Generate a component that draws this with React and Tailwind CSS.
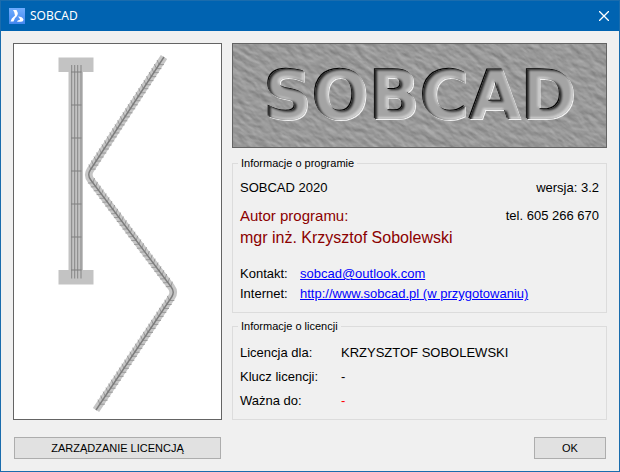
import React from "react";

const SEGMENTS = [
  { from: [73, 131], to: [150, 13] },
  { from: [161, 248], to: [73, 131] },
  { from: [82, 366], to: [161, 248] },
];

function ribsFor({ from, to }) {
  const dx = to[0] - from[0];
  const dy = to[1] - from[1];
  const length = Math.hypot(dx, dy);
  const angle = Math.atan2(dy, dx);
  const spread = 0.98;
  let d = "";
  for (let s = 7; s < length - 6; s += 4.8) {
    const x = from[0] + (dx * s) / length;
    const y = from[1] + (dy * s) / length;
    const ax = x + 5 * Math.cos(angle + spread);
    const ay = y + 5 * Math.sin(angle + spread);
    const bx = x + 5 * Math.cos(angle - spread);
    const by = y + 5 * Math.sin(angle - spread);
    d += `M${ax.toFixed(1)} ${ay.toFixed(1)}L${x.toFixed(1)} ${y.toFixed(1)}L${bx.toFixed(1)} ${by.toFixed(1)}`;
  }
  return d;
}

const BAR = "M150 13L76.3 126Q73 131 76.8 136L157.2 243Q161 248 157.7 253L82 366";

function Reinforcement() {
  return (
    <svg viewBox="0 0 207 375" className="h-auto w-full" role="img" aria-label="Zbrojenie" fill="none">
      <g fill="#c3c3c3">
        <rect x="44.5" y="13.5" width="35" height="14.5" />
        <rect x="44.5" y="226" width="35" height="14.5" />
        <rect x="54.5" y="28" width="14.5" height="198" />
      </g>
      <path d="M57.7 21V234.5M60.7 21V234.5M63.7 21V234.5M67 21V234.5" stroke="#858585" />
      <path
        d="M57 28h10.5M57 61h10.5M57 94h10.5M57 127h10.5M57 160h10.5M57 193h10.5M57 226h10.5"
        stroke="#808080"
        strokeWidth="1.2"
      />
      <path d={BAR} stroke="#c6c6c6" strokeWidth="7.6" />
      {SEGMENTS.map((segment, i) => (
        <path key={i} d={ribsFor(segment)} stroke="#939393" strokeWidth="0.9" />
      ))}
      <path d={BAR} stroke="#7c7c7c" strokeWidth="1.4" />
    </svg>
  );
}

function StoneLogo() {
  return (
    <svg viewBox="0 0 373 103" className="block w-full" role="img" aria-label="SOBCAD">
      <defs>
        <filter id="stone" x="0" y="0" width="100%" height="100%" colorInterpolationFilters="sRGB">
          <feTurbulence type="fractalNoise" baseFrequency="0.08 0.16" numOctaves="5" seed="8" />
          <feColorMatrix values="0 0 0 0 0  0 0 0 0 0  0 0 0 0 0  1 0 0 0 0" />
          <feDiffuseLighting surfaceScale="0.5" lightingColor="#d8d8d8" diffuseConstant="1">
            <feDistantLight azimuth="70" elevation="45" />
          </feDiffuseLighting>
        </filter>
        <filter id="bevel" x="-5%" y="-20%" width="110%" height="140%" colorInterpolationFilters="sRGB">
          <feOffset in="SourceAlpha" dx="-1" dy="-1" result="up" />
          <feOffset in="SourceAlpha" dx="1" dy="1" result="down" />
          <feFlood floodColor="#050505" />
          <feComposite in2="up" operator="in" result="dark" />
          <feFlood floodColor="#f2f2f2" />
          <feComposite in2="down" operator="in" result="light" />
          <feOffset in="SourceAlpha" dx="2" dy="1" />
          <feGaussianBlur stdDeviation="1.3" result="soft" />
          <feFlood floodColor="#222222" />
          <feComposite in2="soft" operator="out" />
          <feComposite in2="SourceAlpha" operator="in" result="shade" />
          <feOffset in="SourceAlpha" dx="-2" dy="-2" />
          <feGaussianBlur stdDeviation="1" result="softer" />
          <feFlood floodColor="#d0d0d0" />
          <feComposite in2="softer" operator="out" />
          <feComposite in2="SourceAlpha" operator="in" result="shine" />
          <feMerge>
            <feMergeNode in="light" />
            <feMergeNode in="dark" />
            <feMergeNode in="SourceGraphic" />
            <feMergeNode in="shine" />
            <feMergeNode in="shade" />
          </feMerge>
        </filter>
      </defs>
      <rect width="373" height="103" fill="#999999" />
      <g transform="rotate(35 186 51)">
        <rect x="-60" y="-140" width="500" height="390" filter="url(#stone)" />
      </g>
      <text
        x="187"
        y="75"
        textAnchor="middle"
        fill="#a4a4a4"
        filter="url(#bevel)"
        className="font-['DejaVu_Sans',sans-serif] text-[67px] font-bold"
      >
        SOBCAD
      </text>
    </svg>
  );
}

function AppIcon() {
  return (
    <svg viewBox="0 0 16 16" className="size-4" aria-hidden="true">
      <defs>
        <linearGradient id="tile" x1="0" y1="0" x2="0" y2="1">
          <stop offset="0" stopColor="#6fadff" />
          <stop offset="1" stopColor="#4387ee" />
        </linearGradient>
      </defs>
      <rect width="16" height="16" fill="url(#tile)" />
      <path d="M4 2H7.500Q9.500 5 8.500 7Q7.500 9 6 10L4.500 13.500H1.500L2.800 10.500L6 7.500Q5.800 4 4 2z" fill="#fff" />
      <path d="M9 8.500Q13.500 8.500 14.500 11.500Q14.500 13.700 12 13.700H8Q8 12 11 11.700Q11 10.500 9 8.500z" fill="#fff" />
    </svg>
  );
}

function Group({ title, children }) {
  return (
    <fieldset className="border border-[#dcdcdc] px-[7px]">
      <legend className="-ml-0.5 px-[3px] text-[11px] leading-[13px]">{title}</legend>
      {children}
    </fieldset>
  );
}

function LicenseRow({ label, value, valueClass = "" }) {
  return (
    <div className="flex leading-6">
      <dt className="w-[101px]">{label}</dt>
      <dd className={valueClass}>{value}</dd>
    </div>
  );
}

const BUTTON = "h-[22px] border border-[#adadad] bg-[#e1e1e1] text-[11px] leading-5";

export default function App() {
  return (
    <div className="flex min-h-screen flex-col border border-[#1a6cad] bg-[#f0f0f0] font-['Liberation_Sans',Arial,sans-serif] text-[13px] text-black">
      <header className="flex h-[30px] items-center gap-[5px] bg-[#0063b1] pr-2 pl-2 text-white">
        <AppIcon />
        <h1 className="flex-1 font-['Noto_Sans',sans-serif] text-xs">SOBCAD</h1>
        <button type="button" aria-label="Zamknij" className="p-0.5">
          <svg viewBox="0 0 10 10" className="size-2.5" stroke="#fff" strokeWidth="1.3" fill="none">
            <path d="M0 0L10 10M10 0L0 10" />
          </svg>
        </button>
      </header>

      <main className="flex flex-1 flex-col gap-[17px] px-3 pt-3 pb-2.5">
        <div className="flex gap-2.5">
          <div className="w-[209px] shrink-0 border border-[#646464] bg-white">
            <Reinforcement />
          </div>

          <div className="flex min-w-0 flex-1 flex-col">
            <div className="mb-[9px] border border-[#646464]">
              <StoneLogo />
            </div>

            <div className="flex flex-col gap-[7px]">
              <Group title="Informacje o programie">
                <div className="flex justify-between pt-2 leading-5">
                  <p>SOBCAD 2020</p>
                  <p>wersja: 3.2</p>
                </div>
                <div className="flex justify-between pt-2 leading-5">
                  <p className="text-[15px] text-[#8b0000]">Autor programu:</p>
                  <p>tel. 605 266 670</p>
                </div>
                <p className="pt-0.5 text-base leading-5 text-[#8b0000]">mgr inż. Krzysztof Sobolewski</p>
                <dl className="pt-4 pb-2 leading-5">
                  <div className="flex">
                    <dt className="w-[60px]">Kontakt:</dt>
                    <dd>
                      <a href="mailto:sobcad@outlook.com" className="text-[#0000ff] underline">sobcad@outlook.com</a>
                    </dd>
                  </div>
                  <div className="flex">
                    <dt className="w-[60px]">Internet:</dt>
                    <dd>
                      <a href="http://www.sobcad.pl" className="text-[#0000ff] underline">http://www.sobcad.pl (w przygotowaniu)</a>
                    </dd>
                  </div>
                </dl>
              </Group>

              <Group title="Informacje o licencji">
                <dl className="pt-2 pb-1.5">
                  <LicenseRow label="Licencja dla:" value="KRZYSZTOF SOBOLEWSKI" />
                  <LicenseRow label="Klucz licencji:" value="-" />
                  <LicenseRow label="Ważna do:" value="-" valueClass="text-[#ff0000]" />
                </dl>
              </Group>
            </div>
          </div>
        </div>

        <div className="flex justify-between px-px">
          <button type="button" className={`${BUTTON} w-[207px]`}>ZARZĄDZANIE LICENCJĄ</button>
          <button type="button" className={`${BUTTON} w-[72px]`}>OK</button>
        </div>
      </main>
    </div>
  );
}
